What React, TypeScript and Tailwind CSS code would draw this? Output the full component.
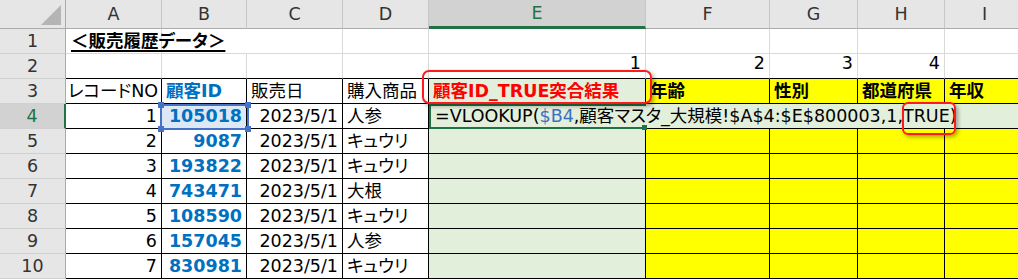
import type { ReactNode } from 'react'

const font = "font-['DejaVu_Sans','Noto_Sans_CJK_JP',sans-serif] [font-feature-settings:'palt']"

type CellProps = {
  children?: ReactNode
  className?: string
}

// plain cell outside the table: light grid lines
function Grid({ children, className = '' }: CellProps) {
  return (
    <div className={`flex items-center overflow-visible whitespace-nowrap border-r border-b border-[#d9d9d9] ${className}`}>
      {children}
    </div>
  )
}

// cell inside the bordered table
function Td({ children, className = '' }: CellProps) {
  return (
    <div className={`flex items-center overflow-hidden whitespace-nowrap border-r border-b border-black px-[4px] ${className}`}>
      {children}
    </div>
  )
}

function ColHead({ label, active = false }: { label: string; active?: boolean }) {
  return (
    <div
      className={`flex items-center justify-center border-r border-[#c6c6c6] ${
        active
          ? 'bg-[#d2d2d2] text-[#217346] border-b-[3px] border-b-[#217346]'
          : 'bg-[#e6e6e6] text-[#333] border-b border-b-[#ababab]'
      }`}
    >
      {label}
    </div>
  )
}

function RowHead({ n, active = false }: { n: number; active?: boolean }) {
  return (
    <div
      className={`flex items-center justify-center border-b border-[#d0d0d0] ${
        active
          ? 'bg-[#d2d2d2] text-[#217346] border-r-2 border-r-[#217346]'
          : 'bg-[#e6e6e6] text-[#333] border-r border-r-[#ababab]'
      }`}
    >
      {n}
    </div>
  )
}

const sales = [
  { no: 1, id: 105018, item: '人参' },
  { no: 2, id: 9087, item: 'キュウリ' },
  { no: 3, id: 193822, item: 'キュウリ' },
  { no: 4, id: 743471, item: '大根' },
  { no: 5, id: 108590, item: 'キュウリ' },
  { no: 6, id: 157045, item: '人参' },
  { no: 7, id: 830981, item: 'キュウリ' },
]

export default function App() {
  return (
    <div className={`relative w-[1018px] h-[280px] overflow-hidden bg-white text-black ${font} text-[17.5px]`}>
      <div className="grid grid-cols-[66px_96px_85px_96px_86px_217px_124px_88px_87px_80px] grid-rows-[29px_repeat(10,25px)]">
        {/* column letters */}
        <div className="relative bg-[#e6e6e6] border-r border-r-[#ababab] border-b border-b-[#ababab]">
          <div className="absolute right-[4px] bottom-[3px] w-0 h-0 border-l-[20px] border-l-transparent border-b-[20px] border-b-[#b4b4b4]" />
        </div>
        <ColHead label="A" />
        <ColHead label="B" />
        <ColHead label="C" />
        <ColHead label="D" />
        <ColHead label="E" active />
        <ColHead label="F" />
        <ColHead label="G" />
        <ColHead label="H" />
        <ColHead label="I" />

        {/* row 1: title */}
        <RowHead n={1} />
        <Grid className="pl-[5px] font-bold">
          <span className="underline decoration-2 underline-offset-[3px] relative z-10">＜販売履歴データ＞</span>
        </Grid>
        <Grid className="border-r-0" />
        <Grid />
        <Grid />
        <Grid />
        <Grid />
        <Grid />
        <Grid />
        <Grid />

        {/* row 2: column index numbers */}
        <RowHead n={2} />
        <Grid className="border-b-black" />
        <Grid className="border-b-black" />
        <Grid className="border-b-black" />
        <Grid className="border-b-black" />
        <Grid className="border-b-black justify-end items-end pb-[2px] pr-[4px]">1</Grid>
        <Grid className="border-b-black justify-end items-end pb-[2px] pr-[4px]">2</Grid>
        <Grid className="border-b-black justify-end items-end pb-[2px] pr-[4px]">3</Grid>
        <Grid className="border-b-black justify-end items-end pb-[2px] pr-[4px]">4</Grid>
        <Grid className="border-b-black" />

        {/* row 3: headings */}
        <RowHead n={3} />
        <Td className="pl-[2px] pr-0">レコードNO</Td>
        <Td className="font-bold text-[#0070c0]">顧客ID</Td>
        <Td>販売日</Td>
        <Td>購入商品</Td>
        <Td className="bg-[#e2efda] font-bold text-[#ff0000]">顧客ID_TRUE突合結果</Td>
        <Td className="bg-[#ffff00] font-bold">年齢</Td>
        <Td className="bg-[#ffff00] font-bold">性別</Td>
        <Td className="bg-[#ffff00] font-bold">都道府県</Td>
        <Td className="bg-[#ffff00] font-bold">年収</Td>

        {sales.map((r, i) => (
          <div key={r.no} className="contents">
            <RowHead n={i + 4} active={i === 0} />
            <Td className="justify-end">{r.no}</Td>
            <Td className={`justify-end font-bold text-[#0070c0] ${i === 0 ? 'bg-[#dde8f6]' : ''}`}>{r.id}</Td>
            <Td className="justify-end">2023/5/1</Td>
            <Td>{r.item}</Td>
            {i === 0 ? (
              // cell E4 in edit mode, the formula runs on over F4:I4
              <div className="relative col-span-5 flex items-center whitespace-nowrap bg-[#e2efda] border-b border-black pl-[6px]">
                <div className="absolute left-0 top-0 w-[217px] h-[25px] border-l-2 border-t-2 border-b-2 border-[#217346]" />
                <div className="absolute left-[213px] top-[21px] w-[5px] h-[5px] bg-[#217346]" />
                <span className="relative">
                  =VLOOKUP(<span className="text-[#3a6fc8]">$B4</span>,顧客マスタ_大規模!$A$4:$E$800003,1,TRUE)
                </span>
              </div>
            ) : (
              <>
                <Td className="bg-[#e2efda]" />
                <Td className="bg-[#ffff00]" />
                <Td className="bg-[#ffff00]" />
                <Td className="bg-[#ffff00]" />
                <Td className="bg-[#ffff00]" />
              </>
            )}
          </div>
        ))}
      </div>

      {/* reference highlight on B4 */}
      <div className="absolute left-[160px] top-[104px] w-[89px] h-[26px] border-2 border-[#4472c4]">
        <div className="absolute -left-[4px] -top-[4px] w-[6px] h-[6px] bg-[#4472c4]" />
        <div className="absolute -right-[4px] -top-[4px] w-[6px] h-[6px] bg-[#4472c4]" />
        <div className="absolute -left-[4px] -bottom-[4px] w-[6px] h-[6px] bg-[#4472c4]" />
        <div className="absolute -right-[4px] -bottom-[4px] w-[6px] h-[6px] bg-[#4472c4]" />
      </div>

      {/* red callouts */}
      <div className="absolute left-[422px] top-[70px] w-[230px] h-[34px] rounded-[7px] border-2 border-[#ff1a1a] shadow-[2px_2px_4px_rgba(0,0,0,0.35)]" />
      <div className="absolute left-[902px] top-[102px] w-[54px] h-[33px] rounded-[6px] border-2 border-[#ff1a1a] shadow-[2px_2px_4px_rgba(0,0,0,0.35)]" />
    </div>
  )
}
